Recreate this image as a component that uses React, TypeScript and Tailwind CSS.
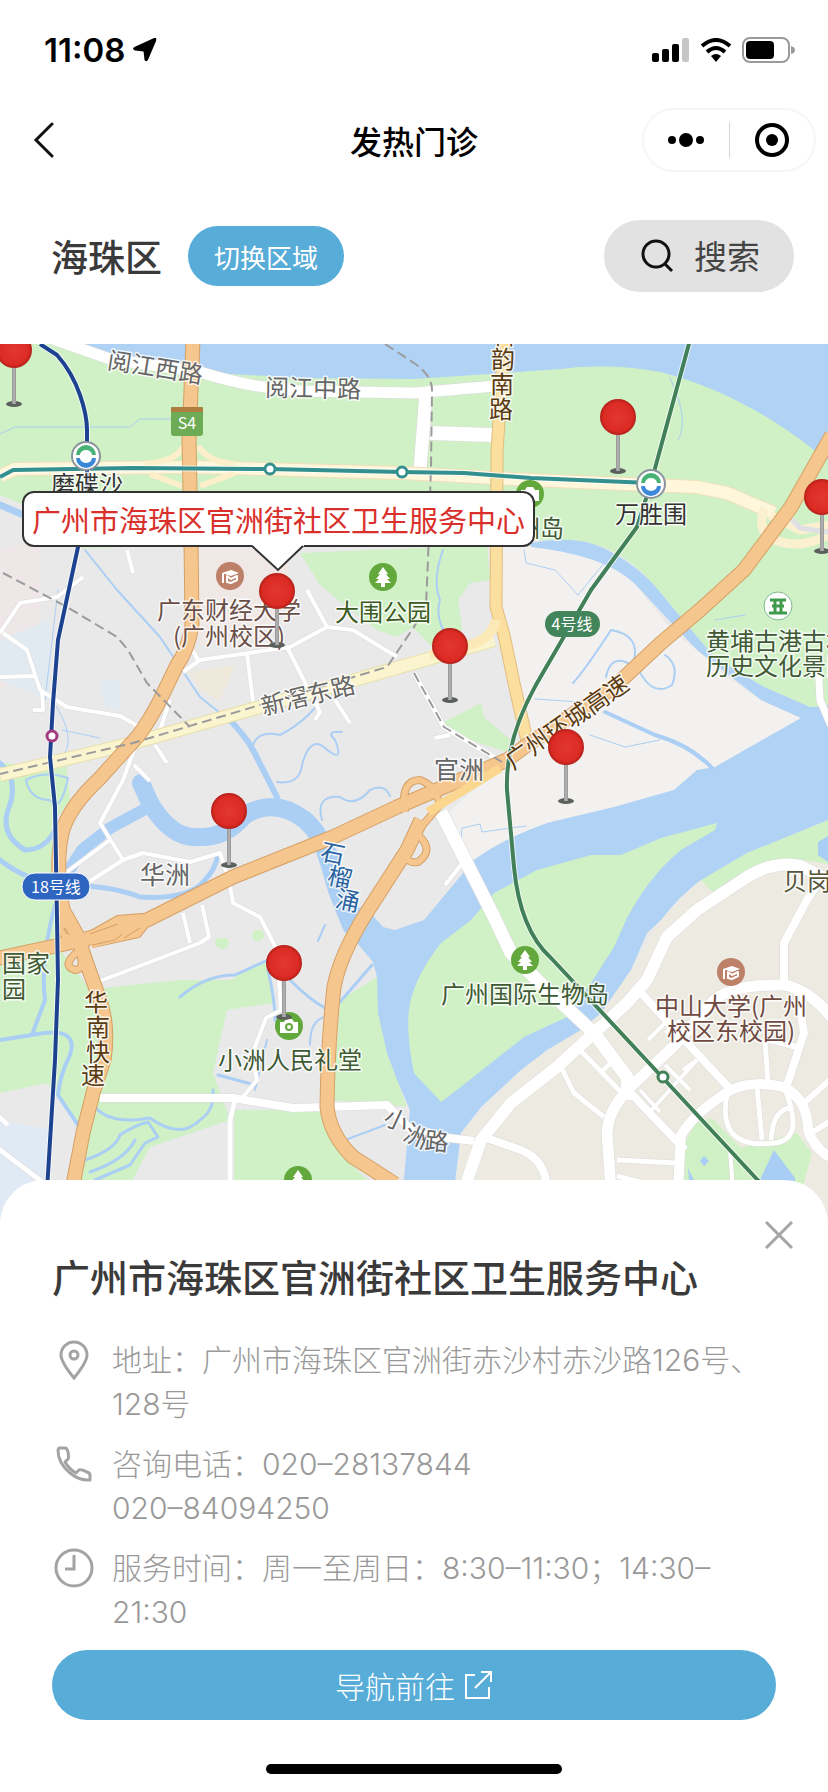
// src/App.tsx
import type { ReactNode } from 'react';

const pins = [
  { name: '磨碟沙', x: 14, y: 350 },
  { name: '万胜围', x: 618, y: 417 },
  { name: '黄埔古港', x: 822, y: 497 },
  { name: '官洲街', x: 277, y: 591 },
  { name: '大围公园', x: 450, y: 646 },
  { name: '官洲', x: 566, y: 747 },
  { name: '华洲', x: 229, y: 811 },
  { name: '小洲', x: 284, y: 963 },
];

// the map is drawn in an 828 x 880 space that starts at y = 344
const MAP_TOP = 344;
const MAP_W = 828;
const MAP_H = 880;

const highways = [
  'M193 340L189 440L191 540L192 625Q188 650 177 665L160 700Q150 720 138 736L100 778Q68 808 62 833Q55 865 63 910L77 935L88 967L100 1000Q109 1027 104 1060L93 1093L83 1133L72 1190',
  'M-5 959L83 940L147 920L233 877L333 837L397 807L507 760L527 745L614 687L661 643L700 610L744 570L791 507L832 435',
  'M421 820L407 850L367 912Q340 955 334 987Q328 1040 327 1107Q330 1135 353 1157L395 1184',
];

const loops =
  'M405 812Q400 780 420 780Q435 785 440 805L410 840Q400 865 418 862Q435 850 418 835M75 930L60 922Q60 940 75 938M80 950Q60 965 75 970Q85 970 80 952M88 936L118 919L142 917L146 924L138 934L92 944';

const whiteRoads = [
  { d: 'M50 338L110 359L200 372Q250 388 300 391L414 393L495 386', w: 11 },
  { d: 'M426 393L420 470', w: 13 },
  { d: 'M430 433L492 435', w: 14 },
  { d: 'M100 1098L233 1098L293 1108L387 1105L415 1134L474 1141', w: 8 },
  { d: 'M235 1100L230 1120L230 1190', w: 5 },
  { d: 'M243 1097L257 1080L252 1055L266 1018L281 1010L277 950L260 917L233 903L229 880', w: 4 },
  { d: 'M229 880L220 853L190 862L143 853L123 860L65 897', w: 4 },
  { d: 'M134 750L123 780L100 823L123 860M110 840L64 874', w: 4 },
  { d: 'M3 633L27 650L40 690L67 707L120 716L138 726M42 690L43 710L33 710M0 677L34 676', w: 4 },
  { d: 'M183 672L200 660L290 647L327 627L353 630L397 657M247 653L253 702M287 647L320 712L315 720M335 700L350 723M307 590L327 627', w: 4 },
  { d: 'M0 633L20 603L57 597L83 577M127 550L133 573', w: 4 },
  { d: 'M100 981L200 943L209 937L202 905M190 943L183 913', w: 4 },
  { d: 'M155 745L167 763M134 765L150 781M187 640L198 660M170 700L160 730', w: 4 },
  { d: 'M-5 1146L45 1184M-3 1115L8 1125', w: 5 },
  { d: 'M818 660L820 700L832 728', w: 7 },
  { d: 'M414 673L444 727L477 747L502 762', w: 5 },
  { d: 'M435 738L450 735M445 885L465 860', w: 4 },
  { d: 'M441 812L494 917L511 953L537 980L594 1033L627 1077L628 1100', w: 13 },
  { d: 'M464 1190L481 1140L511 1103L557 1067L594 1033L627 1003L647 980L667 937L697 910L747 877Q775 860 801 866L832 882', w: 12 },
  { d: 'M611 1190L607 1133Q608 1105 641 1077L677 1043L714 1000Q735 984 784 985Q810 990 832 1018', w: 11 },
  { d: 'M641 993L731 1090M625 1087L685 1150', w: 8 },
  { d: 'M678 1190L681 1135Q695 1112 731 1090Q754 1080 784 1087Q808 1100 808 1130Q815 1150 832 1158', w: 10 },
  { d: 'M784 985L784 943L807 900L820 880M797 990L804 1033L787 1085', w: 8 },
  { d: 'M727 1094Q716 1150 774 1143Q806 1140 784 1087M757 1087L762 1140M771 1140Q773 1108 792 1108M765 1040L768 1084', w: 5 },
  { d: 'M484 1137L521 1150Q546 1160 547 1190', w: 8 },
  { d: 'M561 1067L574 1093L604 1117M617 1160L677 1163M617 1176L640 1182M575 1045L622 1093M600 1073L614 1060', w: 5 },
  { d: 'M697 1060L649 1113M655 1010L678 1038M648 1040L668 1020M665 1065L690 1090M640 1090L660 1112M665 1033L680 1020M683 1070L697 1060M730 1150L733 1190', w: 4 },
  { d: 'M811 1133L832 1120M804 1103L832 1078M770 1040L800 1048', w: 6 },
];

const creeks = [
  { d: 'M141 783L150 803Q172 840 200 837Q225 838 245 815Q275 797 305 820Q322 835 328 860', w: 18 },
  { d: 'M328 855L338 890L352 925', w: 20 },
  { d: 'M147 808L110 828L82 850L68 872', w: 12 },
  { d: 'M85 550L117 590L160 637L200 697L225 717', w: 2 },
  { d: 'M225 715Q245 735 253 750L277 797', w: 6 },
  { d: 'M253 745Q258 730 280 735Q300 725 315 708M277 782Q300 785 302 765Q310 735 325 748Q345 765 335 740Q325 730 342 732', w: 2 },
  { d: 'M322 820Q315 795 340 797Q355 808 370 790Q385 783 390 796', w: 2 },
  { d: 'M0 505L40 522', w: 7 },
  { d: 'M0 763Q20 780 8 810Q0 835 25 850Q45 850 55 830M0 860Q25 880 60 885Q110 885 140 897Q190 900 205 880Q215 870 218 855', w: 5 },
  { d: 'M26 780Q45 770 68 778Q60 815 50 800Q30 800 26 780', w: 2 },
  { d: 'M55 905Q40 960 45 1000L32 1035L0 1040M32 1035Q80 1025 70 1055Q60 1075 58 1095L78 1125', w: 4 },
  { d: 'M95 1107Q110 1125 150 1118Q180 1140 200 1120Q215 1110 213 1090', w: 3 },
  { d: 'M85 1160Q115 1150 120 1135Q135 1125 148 1122L158 1137L145 1143L130 1165L95 1180M90 1172Q125 1160 135 1140', w: 3 },
  { d: 'M180 997Q205 975 235 975L268 960M218 1075L255 1085M268 970Q275 1000 275 1020M290 980Q310 1000 325 1008M340 1002L372 965', w: 3 },
  { d: 'M267 1040L255 1090M325 1017Q310 1020 310 1045M345 1140L385 1125M318 941L325 925', w: 2 },
  { d: 'M0 434L15 427L130 427L140 419L175 419M58 590L45 700M52 700Q80 740 60 760M62 730L100 738', w: 1 },
  { d: 'M443 550Q432 580 440 600Q434 620 450 640M573 683Q585 670 611 630Q640 635 634 660Q650 700 672 685Q680 665 665 655M606 677Q610 655 628 663', w: 2 },
  { d: 'M535 699L580 702M590 735L625 747L660 740M460 850L462 828L480 824L482 832L526 826', w: 1 },
  { d: 'M605 712L655 735Q690 745 712 768', w: 4 },
  { d: 'M670 378Q690 420 678 440M578 595L605 562M524 550L526 563L555 570L578 595M715 620L745 615', w: 1 },
];

const rails = [
  'M385 344L414 363Q432 375 432 390L431 467L428 560L426 605L414 627L387 667L260 705L133 743L0 774',
  'M3 573L67 607L117 637L128 650L147 683L190 727',
  'M414 673L444 727L477 747L502 762',
];

const metros = [
  { d: 'M0 477L13 470L133 468L270 469L402 472L464 473L531 478L650 483', c: '#33908f' },
  { d: 'M40 344L57 355Q72 372 80 395Q87 415 87 430L87 490L78 547L58 640L53 703L50 757L55 807L57 920L58 980L55 1060L47 1190', c: '#1d4390' },
  { d: 'M690 340L651 483L637 527L591 590L562 640L537 683Q505 740 507 790L514 867Q520 930 551 958L581 990L662 1077L765 1188', c: '#42805a' },
];

const greens = [
  // north bank of the island
  'M0 344H62L110 357L230 374L300 378L414 379L490 374L560 369Q610 363 660 372Q740 392 814 450L828 460V707L810 707L764 687L714 657L664 597Q625 545 574 540H500L80 548L60 520L0 495Z',
  'M300 553L487 545L490 580L470 583L458 600L462 630L440 655L413 627L397 637L377 630L347 607L320 585Z',
  'M444 722L481 703L484 717L511 740L507 752L450 733Z',
  'M0 763L67 767L70 800L52 825L57 945L90 990L113 987L180 980L230 980L267 960L273 1003L227 1010L213 1073L230 1120L200 1130L150 1147L127 1190L75 1190L95 1100L82 1130L47 1083L0 1093Z',
  'M234 1110H320Q330 1150 375 1186H234Z',
  'M340 1000L377 977L387 1053L407 1107L333 1100Z',
  'M718 898L701 880L747 853L828 820V864L790 858L760 864Z',
  'M684 1190V1143L697 1122L712 1118L741 1148L797 1133L812 1153L802 1190Z',
  'M218 938a7 6 0 1 0 8 0ZM255 930a6 6 0 1 0 6 0Z',
];

type LabelProps = {
  x: number;
  y: number;
  children: ReactNode;
  color?: string;
  size?: number;
  rotate?: number;
  anchor?: 'start' | 'middle';
};

function Label({ x, y, children, color = '#3f5a34', size = 24, rotate = 0, anchor = 'middle' }: LabelProps) {
  return (
    <text
      x={x}
      y={y}
      fill={color}
      fontSize={size}
      textAnchor={anchor}
      transform={rotate ? `rotate(${rotate} ${x} ${y})` : undefined}
      stroke="#ffffff"
      strokeWidth="3"
      strokeOpacity="0.8"
      strokeLinejoin="round"
      paintOrder="stroke"
    >
      {children}
    </text>
  );
}

function TreeMark({ x, y }: { x: number; y: number }) {
  return (
    <g transform={`translate(${x} ${y})`}>
      <circle r="14" fill="#62a83c" />
      <path d="M0 -10L5 -3H3L7 2H4L8 6H2V10H-2V6H-8L-4 2H-7L-3 -3H-5Z" fill="#fff" />
    </g>
  );
}

function SchoolMark({ x, y }: { x: number; y: number }) {
  return (
    <g transform={`translate(${x} ${y})`}>
      <circle r="14" fill="#bd8169" />
      <path d="M-8 -3L1 -6L9 -3L1 0Z" fill="#fff" />
      <path d="M-7 -3V7M-3 0V6L1 7L7 4V0L1 3Z" fill="none" stroke="#fff" strokeWidth="2" />
    </g>
  );
}

function StationMark({ x, y }: { x: number; y: number }) {
  return (
    <g transform={`translate(${x} ${y})`}>
      <circle r="14" fill="#fff" stroke="#8a949c" strokeWidth="2" />
      <path d="M-10 -1A10 10 0 0 1 10 -1H6A6 5 0 0 0 -6 -1Z" fill="#48b277" />
      <path d="M-10 2A10 10 0 0 0 10 2H6A6 5 0 0 1 -6 2Z" fill="#3c88d8" />
    </g>
  );
}

function MapCanvas() {
  return (
    <svg
      viewBox={`0 ${MAP_TOP} ${MAP_W} ${MAP_H}`}
      className="block h-auto w-full"
      fill="none"
      strokeLinejoin="round"
      aria-label="海珠区地图"
    >
      <rect x="0" y="344" width="828" height="880" fill="#e9e9ea" />
      <path d="M0 550L40 540V640L0 690Z" fill="#efe6e8" />
      <path d="M0 640L50 620V700L0 680ZM100 680H120V708H105Z" fill="#e1eaf1" />
      <path d="M0 1120L50 1130L40 1224H0Z" fill="#e0eaf5" />
      <path d="M195 550H290L285 600L262 640L200 645Z" fill="#efe8e5" />
      <path d="M190 672L235 665L220 700L200 690Z" fill="#efe9dc" />
      {/* farmland east of the park */}
      <path d="M500 545H534L574 552L604 560L634 583L674 633L697 650L727 677L761 700L801 718L715 767L697 770L674 790L614 807L547 823L474 860L440 820L507 760L527 730L504 640Z" fill="#f2f1ef" />
      <path d="M454 1224L461 1133L521 1070L601 1013L631 970L661 920L701 880L747 853L828 820V1224Z" fill="#edebe1" />
      <path d="M62 344H828V470L500 400L200 385Z" fill="#b0d2f5" />
      {greens.map((d) => (
        <path key={d} d={d} fill="#cff1c5" />
      ))}
      <path d="M531 543Q574 535 601 547Q640 565 664 597L714 657L764 687L810 707L828 707V715L801 718L761 700L697 650L634 583Q604 555 531 547Z" fill="#b0d2f5" />
      <path
        d="M828 705L801 718L715 767L697 770L674 790L614 807L547 823Q500 840 474 860L424 920L395 930L383 927L370 912L340 900L357 943L373 962L377 977L378 1013L387 1053L397 1080L410 1110L403 1190H454L461 1133L481 1107L521 1070L547 1050L581 1030L601 1013L631 970L647 933L661 920Q680 895 701 880L747 853L828 820Z"
        fill="#b0d2f5"
      />
      <path
        d="M471 920L494 893L537 870L591 855H621L661 838L717 823L715 830L681 850Q650 875 627 918L614 947L591 983L567 1017L524 1037L457 1090L441 1102L414 1073Q405 1030 410 1003Q416 975 441 943Z"
        fill="#cff1c5"
      />
      <path d="M758 1184L774 1150L795 1178V1184ZM818 842L828 836V862L818 855ZM704 1156L709 1161L704 1166L700 1161ZM688 1168L694 1180H689Z" fill="#a9cef5" />
      {creeks.map((c) => (
        <path key={c.d} d={c.d} stroke="#abcef4" strokeWidth={c.w} strokeLinecap="round" />
      ))}

      {whiteRoads.map((r) => (
        <path key={r.d} d={r.d} stroke="#dcd9da" strokeWidth={r.w + 1} />
      ))}
      {whiteRoads.map((r) => (
        <path key={r.d} d={r.d} stroke="#ffffff" strokeWidth={r.w} />
      ))}
      <path d="M0 476L15 469L190 467L402 473L531 480L697 487L727 493L774 513" stroke="#f1dfba" strokeWidth="14" />
      <path d="M0 476L15 469L190 467L402 473L531 480L697 487L727 493L774 513" stroke="#fff7dc" strokeWidth="12" />
      <path d="M0 775L133 743L260 707L414 663L494 640" stroke="#e8dfae" strokeWidth="14" />
      <path d="M0 775L133 743L260 707L414 663L494 640" stroke="#fbf5cf" strokeWidth="12" />
      <path d="M145 464Q175 462 184 446M198 446Q208 462 235 464M150 474L182 486M200 486L235 473" stroke="#fcefc9" strokeWidth="6" />
      <path d="M765 508Q755 530 775 540Q800 550 828 535M770 515L800 530L828 525" stroke="#fbf0cf" strokeWidth="9" />
      <path d="M795 490L785 512L800 528L828 532" stroke="#dfdfe4" strokeWidth="5" />
      <path d="M504 340L497 453L496 607L504 635L514 683L528 745" stroke="#e2bd80" strokeWidth="13" />
      <path d="M504 340L497 453L496 607L504 635L514 683L528 745" stroke="#fadf9f" strokeWidth="11" />
      <path d="M496 620Q492 638 470 645L430 655" stroke="#fbe9b8" strokeWidth="10" />
      {highways.map((d) => (
        <path key={d} d={d} stroke="#d5a066" strokeWidth="15" />
      ))}
      <path d={loops} stroke="#d5a066" strokeWidth="8" />
      {highways.map((d) => (
        <path key={d} d={d} stroke="#f5c68d" strokeWidth="13" />
      ))}
      <path d={loops} stroke="#f5c68d" strokeWidth="6" />
      <path d="M88 934L118 917L142 915L146 924L138 936L92 948Z" fill="#f5c68d" />
      <path d="M90 934L118 924M92 945L115 940L122 934M124 938L140 928" stroke="#d5a066" />
      <path d="M428 812L500 768" stroke="#fbd68f" strokeWidth="9" />
      {rails.map((d) => (
        <path key={d} d={d} stroke="#9b9b9b" strokeWidth="2" strokeDasharray="10 5" />
      ))}

      {metros.map((m) => (
        <g key={m.c}>
          <path d={m.d} stroke="#ffffff" strokeOpacity="0.7" strokeWidth="6" />
          <path d={m.d} stroke={m.c} strokeWidth="4" />
        </g>
      ))}
      <circle cx="270" cy="469" r="5" fill="#fff" stroke="#33908f" strokeWidth="3" />
      <circle cx="402" cy="472" r="5" fill="#fff" stroke="#33908f" strokeWidth="3" />
      <circle cx="52" cy="736" r="5" fill="#fff" stroke="#a23a80" strokeWidth="3" />
      <circle cx="663" cy="1077" r="5" fill="#fff" stroke="#42805a" strokeWidth="3" />
      <StationMark x={86} y={456} />
      <StationMark x={651} y={484} />

      <path d="M171 407H203V433Q203 436 200 436H174Q171 436 171 433Z" fill="#6dab55" />
      <path d="M171 412V409Q171 407 174 407H200Q203 407 203 409V412Z" fill="#b07c40" />
      <text x="187" y="429" fontSize="16" fill="#fff" textAnchor="middle">S4</text>
      <rect x="545" y="611" width="55" height="26" rx="13" fill="#42855a" />
      <text x="572" y="630" fontSize="16" fill="#fff" textAnchor="middle">4号线</text>
      <rect x="22" y="873" width="68" height="27" rx="13" fill="#2d65c0" stroke="#fff" />
      <text x="56" y="893" fontSize="16" fill="#fff" textAnchor="middle">18号线</text>

      <TreeMark x={383} y={577} />
      <TreeMark x={525} y={960} />
      <TreeMark x={298} y={1180} />
      <SchoolMark x={230} y={576} />
      <SchoolMark x={731} y={972} />
      <circle cx="530" cy="494" r="14" fill="#62a83c" />
      <path d="M521 490H525L527 487H533L535 490H539V501H521Z" fill="#fff" />
      <circle cx="778" cy="606" r="14" fill="#fff" stroke="#7fb98f" />
      <path d="M770 600H786M772 606H784M769 613H787M775 600V613M781 600V613" stroke="#3f9a4b" strokeWidth="3" />
      <circle cx="289" cy="1026" r="14" fill="#62a83c" />
      <path d="M280 1022H284L286 1019H292L294 1022H298V1033H280Z" fill="#fff" />
      <circle cx="289" cy="1027" r="3" stroke="#62a83c" strokeWidth="2" />

      <Label x={154} y={376} rotate={9} color="#666">阅江西路</Label>
      <Label x={313} y={397} rotate={1} color="#666">阅江中路</Label>
      <Label x={504} y={344} color="#5a3b12">科</Label>
      <Label x={503} y={368} color="#5a3b12">韵</Label>
      <Label x={502} y={393} color="#5a3b12">南</Label>
      <Label x={501} y={418} color="#5a3b12">路</Label>
      <Label x={87} y={493} color="#333">磨碟沙</Label>
      <Label x={651} y={523} color="#333">万胜围</Label>
      <Label x={528} y={537}>官洲岛</Label>
      <Label x={229} y={619} color="#6a4f48">广东财经大学</Label>
      <Label x={229} y={645} color="#6a4f48">(广州校区)</Label>
      <Label x={383} y={621} color="#3c5b22">大围公园</Label>
      <Label x={706} y={650} anchor="start">黄埔古港古村</Label>
      <Label x={706} y={675} anchor="start">历史文化景区</Label>
      <Label x={310} y={704} rotate={-14} color="#666">新滘东路</Label>
      <Label x={572} y={729} rotate={-35} color="#5a3b12">广州环城高速</Label>
      <Label x={459} y={779} color="#666" size={25}>官洲</Label>
      <Label x={165} y={884} color="#666" size={25}>华洲</Label>
      <Label x={331} y={862} rotate={12} color="#2a63a0">石</Label>
      <Label x={338} y={886} rotate={12} color="#2a63a0">榴</Label>
      <Label x={346} y={909} rotate={12} color="#2a63a0">涌</Label>
      <Label x={783} y={890} anchor="start" color="#56563c">贝岗</Label>
      <Label x={2} y={972} anchor="start">国家</Label>
      <Label x={2} y={998} anchor="start">园</Label>
      <Label x={96} y={1011} color="#5a3b12">华</Label>
      <Label x={98} y={1036} color="#5a3b12">南</Label>
      <Label x={98} y={1061} color="#5a3b12">快</Label>
      <Label x={93} y={1084} color="#5a3b12">速</Label>
      <Label x={525} y={1003}>广州国际生物岛</Label>
      <Label x={290} y={1069}>小洲人民礼堂</Label>
      <Label x={731} y={1015} color="#6f4a42">中山大学(广州</Label>
      <Label x={731} y={1040} color="#6f4a42">校区东校园)</Label>
      <Label x={393} y={1128} rotate={25} color="#666">小</Label>
      <Label x={413} y={1144} rotate={25} color="#666">洲</Label>
      <Label x={436} y={1150} rotate={5} color="#666">路</Label>
    </svg>
  );
}

function PinIcon() {
  return (
    <svg viewBox="0 0 38 76" className="block h-auto w-full" aria-hidden="true">
      <defs>
        <radialGradient id="pinHead">
          <stop offset="0" stopColor="#e2382f" />
          <stop offset="0.8" stopColor="#dc2b24" />
          <stop offset="1" stopColor="#b32019" />
        </radialGradient>
      </defs>
      <ellipse cx="19" cy="72" rx="8" ry="3" fill="#5c605c" />
      <path d="M19 34V72" stroke="#9c9c9c" strokeWidth="4" />
      <path d="M19 34V72" stroke="#bdbdbd" strokeWidth="1" />
      <circle cx="19" cy="18" r="18" fill="url(#pinHead)" />
    </svg>
  );
}

function StatusBar() {
  return (
    <div className="flex h-24 items-center justify-between pl-11 pr-8 pt-1">
      <div className="flex items-center gap-2">
        <span className="font-[Inter] text-[33px] font-semibold leading-10">11:08</span>
        <svg viewBox="0 0 25 25" className="size-6" aria-hidden="true">
          <path d="M22 0Q25 -1 24 3L16 22Q14 26 12 23L11 14L2 13Q-2 11 2 9Z" fill="#000" />
        </svg>
      </div>
      <div className="flex items-center gap-[10px]">
        <svg viewBox="0 0 38 24" className="h-6 w-[38px]" aria-hidden="true">
          <rect x="0" y="15" width="7" height="9" rx="2" />
          <rect x="10" y="11" width="7" height="13" rx="2" />
          <rect x="20" y="6" width="7" height="18" rx="2" />
          <rect x="30" y="0" width="7" height="24" rx="2" fill="#c6c6c6" />
        </svg>
        <svg viewBox="0 0 32 24" className="h-6 w-8" fill="none" stroke="#000" strokeWidth="4" aria-hidden="true">
          <path d="M2 8Q16 -4 30 8" />
          <path d="M7 14Q16 6 25 14" />
          <path d="M11 18Q16 14 21 18L16 24Z" fill="#000" stroke="none" />
        </svg>
        <svg viewBox="0 0 54 26" className="h-[26px] w-[54px]" aria-hidden="true">
          <rect x="1" y="1" width="46" height="24" rx="7" fill="none" stroke="#9a9a9a" strokeWidth="2" />
          <rect x="4" y="4" width="28" height="18" rx="4" />
          <path d="M49 9Q53 10 53 13T49 17Z" fill="#9a9a9a" />
        </svg>
      </div>
    </div>
  );
}

function InfoRow({ icon, children }: { icon: ReactNode; children: ReactNode }) {
  return (
    <li className="flex gap-4">
      <span className="flex h-11 w-11 shrink-0 items-center justify-center text-[#a3a3a3]">{icon}</span>
      <p>{children}</p>
    </li>
  );
}

export default function App() {
  return (
    <div className="flex min-h-screen flex-col bg-white font-['Noto_Sans_CJK_SC',sans-serif] text-black">
      <StatusBar />

      <header className="grid h-[88px] grid-cols-3 items-center px-3">
        <button type="button" aria-label="返回" className="w-14 pl-4">
          <svg viewBox="0 0 32 36" className="h-9 w-8" fill="none" stroke="#111" strokeWidth="3" strokeLinecap="round" aria-hidden="true">
            <path d="M24 2L8 18L24 34" />
          </svg>
        </button>
        <h1 className="text-center text-[32px] font-medium leading-10">发热门诊</h1>
        <div className="flex h-16 w-[174px] items-center justify-self-end rounded-full border-2 border-[#f6f6f6]">
          <button type="button" aria-label="更多" className="flex flex-1 justify-center">
            <svg viewBox="0 0 38 14" className="h-[14px] w-[38px]" aria-hidden="true">
              <circle cx="5" cy="7" r="4" />
              <circle cx="19" cy="7" r="7" />
              <circle cx="33" cy="7" r="4" />
            </svg>
          </button>
          <span className="h-9 w-px bg-[#d5d5d5]" />
          <button type="button" aria-label="关闭小程序" className="flex flex-1 justify-center">
            <svg viewBox="0 0 36 36" className="size-9" aria-hidden="true">
              <circle cx="18" cy="18" r="15" fill="none" stroke="#000" strokeWidth="4" />
              <circle cx="18" cy="18" r="6" />
            </svg>
          </button>
        </div>
      </header>

      <div className="flex items-center justify-between pb-[52px] pl-[51px] pr-[34px] pt-9">
        <div className="flex items-center gap-[26px]">
          <h2 className="text-[37px] font-medium leading-[48px] text-[#3a3a3a]">海珠区</h2>
          <button type="button" className="h-[60px] rounded-full bg-[#57acd8] px-[26px] text-[26px] text-white">
            切换区域
          </button>
        </div>
        <button type="button" className="flex h-[72px] items-center gap-5 rounded-full bg-[#e2e2e2] pl-9 pr-[34px] text-[33px] text-[#444]">
          <svg viewBox="0 0 34 34" className="size-[34px]" fill="none" stroke="#111" strokeWidth="3" aria-hidden="true">
            <circle cx="16" cy="15" r="13" />
            <path d="M25 25L32 32" />
          </svg>
          搜索
        </button>
      </div>

      <main className="relative overflow-hidden">
        <MapCanvas />
        {pins.map((p) => (
          <button
            key={p.name}
            type="button"
            aria-label={p.name}
            className="absolute w-[38px] -translate-x-1/2"
            style={{ left: `${(p.x / MAP_W) * 100}%`, top: `${((p.y - 18 - MAP_TOP) / MAP_H) * 100}%` }}
          >
            <PinIcon />
          </button>
        ))}
        <div className="absolute left-[22px] top-[147px] whitespace-nowrap rounded-xl border-2 border-[#333] bg-white px-2 text-[29px] leading-[52px] text-[#d9302c]">
          广州市海珠区官洲街社区卫生服务中心
          <svg viewBox="0 0 52 28" className="absolute left-[228px] top-full h-7 w-[52px]" aria-hidden="true">
            <path d="M0 0H52V1L26 25L1 1Z" fill="#fff" />
            <path d="M0 1L26 25L51 1" fill="none" stroke="#333" strokeWidth="2" />
          </svg>
        </div>
      </main>

      <section className="relative -mt-11 flex-1 rounded-t-[44px] bg-white px-[52px] pb-2 pt-[70px]">
        <button type="button" aria-label="关闭" className="absolute right-[35px] top-[41px]">
          <svg viewBox="0 0 28 28" className="size-7" fill="none" stroke="#a5a5a5" strokeWidth="3" aria-hidden="true">
            <path d="M1 1L27 27M27 1L1 27" />
          </svg>
        </button>
        <h2 className="text-[38px] font-medium leading-[52px] text-[#3a3a3a]">广州市海珠区官洲街社区卫生服务中心</h2>
        <ul className="mt-9 space-y-4 font-[Inter,'Noto_Sans_CJK_SC',sans-serif] text-[30px] font-light leading-[44px] text-[#999]">
          <InfoRow
            icon={
              <svg viewBox="0 0 32 40" className="h-10 w-8" fill="none" stroke="currentColor" strokeWidth="3" aria-hidden="true">
                <path d="M16 38Q3 22 3 15A13 13 0 0 1 29 15Q29 22 16 38Z" />
                <circle cx="16" cy="15" r="4" />
              </svg>
            }
          >
            地址：广州市海珠区官洲街赤沙村赤沙路126号、128号
          </InfoRow>
          <InfoRow
            icon={
              <svg viewBox="0 0 36 36" className="size-9" fill="none" stroke="currentColor" strokeWidth="3" strokeLinejoin="round" aria-hidden="true">
                <path d="M3 2L9 2Q11 2 12 6Q13 11 12 13L9 16Q13 23 20 27L23 24Q24 23 31 26Q34 27 34 29V34Q24 35 14 27Q2 17 2 4Z" />
              </svg>
            }
          >
            咨询电话：020–28137844
            <br />
            020–84094250
          </InfoRow>
          <InfoRow
            icon={
              <svg viewBox="0 0 40 40" className="size-10" fill="none" stroke="currentColor" strokeWidth="3" aria-hidden="true">
                <circle cx="20" cy="20" r="18" />
                <path d="M20 7V21H11" />
              </svg>
            }
          >
            服务时间：周一至周日：8:30–11:30；14:30–21:30
          </InfoRow>
        </ul>
        <a
          href="#navigate"
          className="mt-4 flex h-[70px] items-center justify-center gap-2 rounded-full bg-[#57acd8] text-[30px] font-light text-white"
        >
          导航前往
          <svg viewBox="0 0 30 30" className="size-[30px]" fill="none" stroke="#fff" strokeWidth="2" aria-hidden="true">
            <path d="M12 5H3V28H26V17M12 18L28 2M18 2H28V12" />
          </svg>
        </a>
        <div className="mx-auto mt-[44px] h-[10px] w-[296px] rounded-full bg-black" />
      </section>
    </div>
  );
}
